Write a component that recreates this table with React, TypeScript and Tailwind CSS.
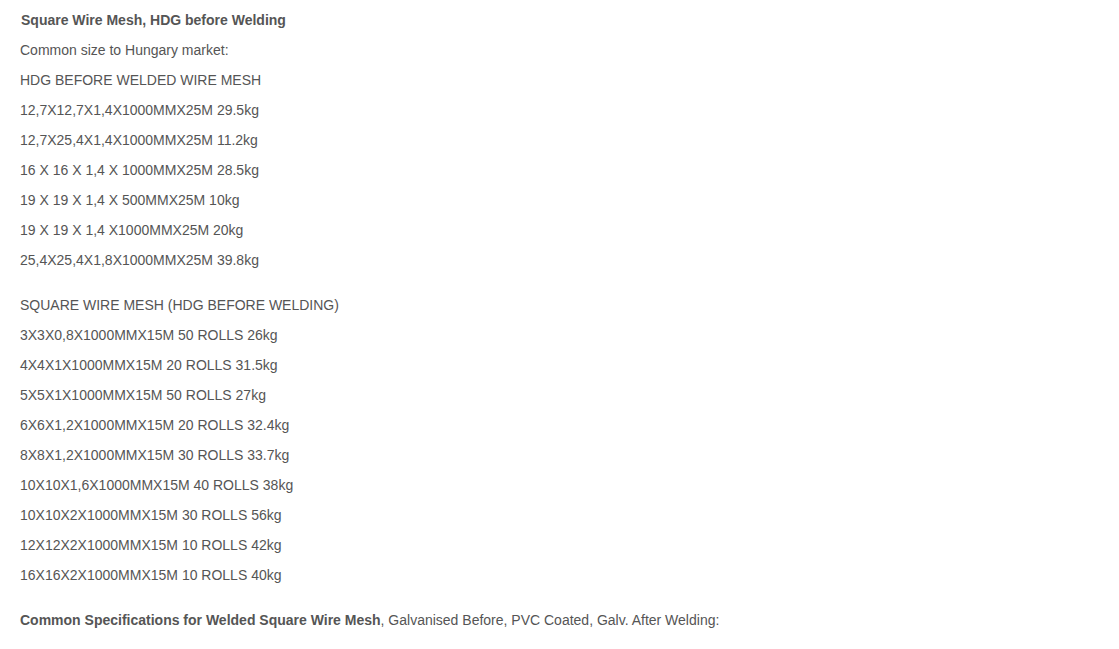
export default function App() {
  const a = [
    "12,7X12,7X1,4X1000MMX25M 29.5kg",
    "12,7X25,4X1,4X1000MMX25M 11.2kg",
    "16 X 16 X 1,4 X 1000MMX25M 28.5kg",
    "19 X 19 X 1,4 X 500MMX25M 10kg",
    "19 X 19 X 1,4 X1000MMX25M 20kg",
    "25,4X25,4X1,8X1000MMX25M 39.8kg",
  ];
  const b = [
    "3X3X0,8X1000MMX15M 50 ROLLS 26kg",
    "4X4X1X1000MMX15M 20 ROLLS 31.5kg",
    "5X5X1X1000MMX15M 50 ROLLS 27kg",
    "6X6X1,2X1000MMX15M 20 ROLLS 32.4kg",
    "8X8X1,2X1000MMX15M 30 ROLLS 33.7kg",
    "10X10X1,6X1000MMX15M 40 ROLLS 38kg",
    "10X10X2X1000MMX15M 30 ROLLS 56kg",
    "12X12X2X1000MMX15M 10 ROLLS 42kg",
    "16X16X2X1000MMX15M 10 ROLLS 40kg",
  ];
  return (
    <div className="min-h-[649px] bg-white pl-5 pt-[5px] text-[14px] leading-[30px] text-[#555555]" style={{ fontFamily: '"Liberation Sans", Arial, sans-serif' }}>
      <p className="font-bold pl-px">Square Wire Mesh, HDG before Welding</p>
      <p>Common size to Hungary market:</p>
      <p>HDG BEFORE WELDED WIRE MESH</p>
      {a.map((t) => (
        <p key={t}>{t}</p>
      ))}
      <p className="mt-[15px]">SQUARE WIRE MESH (HDG BEFORE WELDING)</p>
      {b.map((t) => (
        <p key={t}>{t}</p>
      ))}
      <p className="mt-[15px]">
        <span className="font-bold">Common Specifications for Welded Square Wire Mesh</span>, Galvanised Before, PVC Coated, Galv. After Welding:
      </p>
    </div>
  );
}
